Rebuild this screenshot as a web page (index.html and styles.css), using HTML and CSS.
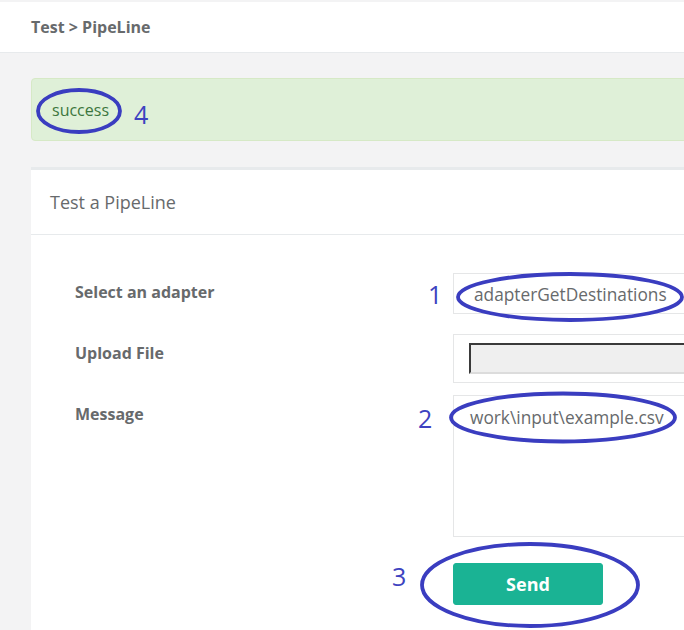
FILE: index.html
```html
<!DOCTYPE html>
<html>
<head>
<meta charset="utf-8">
<link rel="stylesheet" href="styles.css">
</head>
<body>
<div class="page">
  <header class="topbar">
    <h2 class="crumb">Test &gt; PipeLine</h2>
  </header>
  <main class="content">
    <div class="alert">success</div>
    <section class="card">
      <div class="card-title">Test a PipeLine</div>
      <div class="card-body">
        <div class="row row-adapter">
          <label class="label">Select an adapter</label>
          <div class="field select">adapterGetDestinations</div>
        </div>
        <div class="row row-upload">
          <label class="label">Upload File</label>
          <div class="field upload"><div class="file"></div></div>
        </div>
        <div class="row row-message">
          <label class="label">Message</label>
          <div class="field textarea">work\input\example.csv</div>
        </div>
        <div class="row row-send">
          <span></span>
          <div><button class="btn">Send</button></div>
        </div>
      </div>
    </section>
  </main>
  <svg class="annot" width="684" height="630" viewBox="0 0 684 630">
    <g fill="none" stroke="#3a3dc0" stroke-width="3.8">
      <ellipse cx="79" cy="111" rx="41" ry="21"/>
      <ellipse cx="570" cy="297" rx="112" ry="23"/>
      <ellipse cx="563" cy="417.5" rx="112" ry="24"/>
      <ellipse cx="530" cy="585" rx="108" ry="41"/>
    </g>
    <g fill="#3d42c0" font-family="Open Sans, sans-serif" font-size="25">
      <text x="134" y="124">4</text>
      <text x="428" y="304">1</text>
      <text x="418" y="428">2</text>
      <text x="392" y="586">3</text>
    </g>
  </svg>
</div>
</body>
</html>
```
FILE: styles.css
```css
html, body {
  margin: 0;
  padding: 0;
}
body {
  background: #f3f3f4;
  font-family: "Open Sans", "Noto Sans", sans-serif;
  color: #676a6c;
  overflow: hidden;
  width: 684px;
  height: 630px;
}
.page {
  position: relative;
  width: 684px;
  height: 630px;
  overflow: hidden;
}
.topbar {
  margin-top: 2px;
  height: 50px;
  background: #fff;
  border-bottom: 1px solid #e7eaec;
  display: flex;
  align-items: center;
  padding-left: 31px;
}
.crumb {
  margin: 0;
  font-size: 16px;
  font-weight: 700;
  color: #676a6c;
}
.content {
  padding: 25px 0 0 31px;
  width: 700px;
}
.alert {
  height: 61px;
  background: #dff0d8;
  border: 1px solid #d6e9c6;
  border-radius: 4px;
  color: #3c763d;
  font-size: 16px;
  display: flex;
  align-items: center;
  padding-left: 20px;
}
.card {
  margin-top: 26px;
  background: #fff;
  border-top: 3px solid #e7eaec;
}
.card-title {
  height: 64px;
  border-bottom: 1px solid #e7eaec;
  display: flex;
  align-items: center;
  padding-left: 19px;
  font-size: 18px;
  color: #676a6c;
}
.card-body {
  padding: 38px 0 40px 44px;
}
.row {
  display: grid;
  grid-template-columns: 378px 1fr;
}
.label {
  font-size: 16px;
  font-weight: 700;
  line-height: 20px;
  padding-top: 9px;
  color: #676a6c;
}
.field {
  border: 1px solid #e5e6e7;
  box-sizing: border-box;
  font-size: 17.3px;
  color: #676a6c;
}
.select {
  height: 41px;
  line-height: 22px;
  padding: 10px 0 0 20px;
}
.row-upload {
  margin-top: 20px;
}
.upload {
  height: 49px;
  padding: 8px 0 0 15px;
}
.file {
  height: 31px;
  background: #efefef;
  border-top: 2px solid #3a3a3a;
  border-left: 2px solid #3a3a3a;
  border-bottom: 2px solid #dcdcdc;
  box-sizing: border-box;
}
.row-message {
  margin-top: 12px;
}
.textarea {
  height: 142px;
  line-height: 22px;
  padding: 11px 0 0 16px;
}
.row-send {
  margin-top: 26px;
}
.btn {
  width: 150px;
  height: 42px;
  background: #1ab394;
  border: 1px solid #1ab394;
  border-radius: 3px;
  color: #fff;
  font-family: "Open Sans", "Noto Sans", sans-serif;
  font-size: 18px;
  font-weight: 700;
  padding: 0;
}
.annot {
  position: absolute;
  left: 0;
  top: 0;
  pointer-events: none;
}
```
